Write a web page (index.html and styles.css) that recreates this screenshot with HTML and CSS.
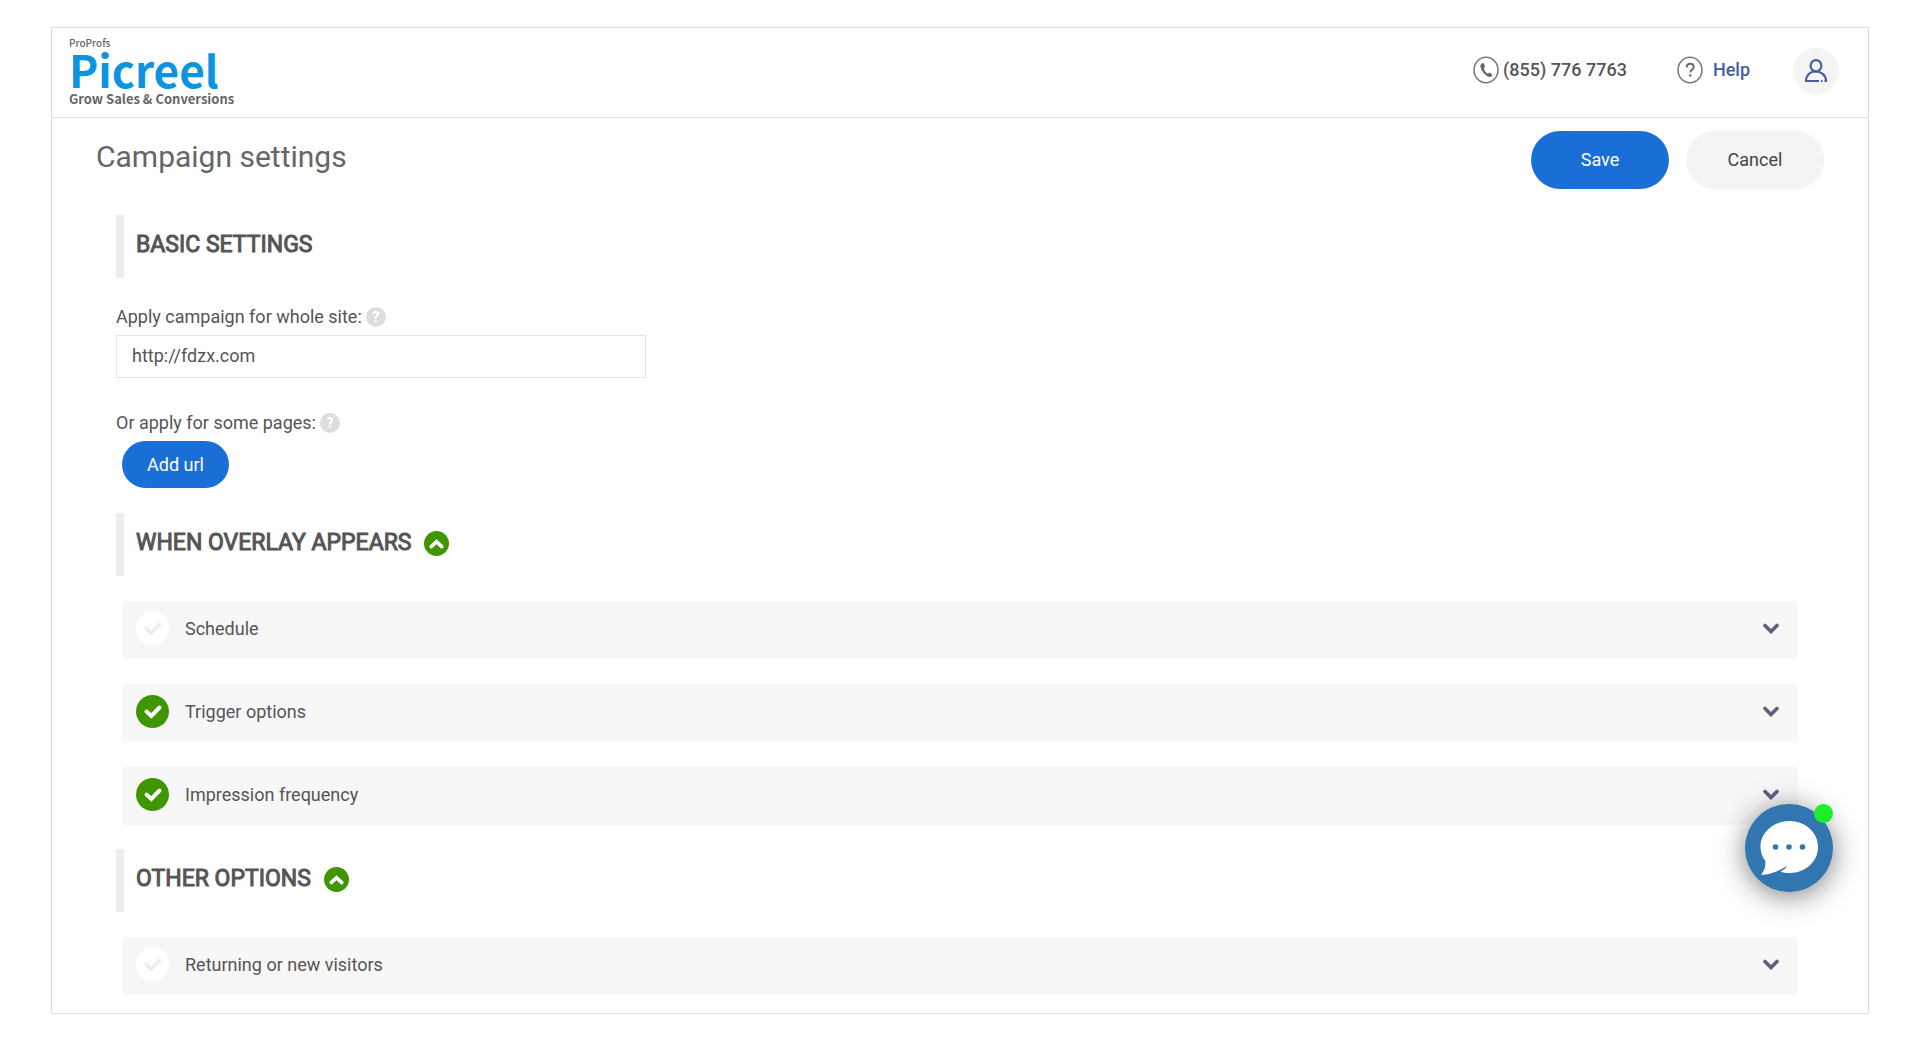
FILE: index.html
```html
<!DOCTYPE html>
<html lang="en">
<head>
  <meta charset="utf-8">
  <title>Campaign settings</title>
  <link rel="stylesheet" href="styles.css">
</head>
<body>
  <svg class="sprite" aria-hidden="true">
    <symbol id="check" viewBox="0 0 33 33">
      <path d="M10.500 16.500l4.800 4.500 8.200-8.500" fill="none" stroke="currentColor" stroke-width="4" stroke-linecap="round"/>
    </symbol>
    <symbol id="chevron-down" viewBox="0 0 16 11">
      <path d="M2 2.500l6 6 6-6" fill="none" stroke="currentColor" stroke-width="3.600" stroke-linecap="round"/>
    </symbol>
    <symbol id="chevron-up" viewBox="0 0 25 25">
      <path d="M7.200 15.600l5.300-5 5.300 5" fill="none" stroke="currentColor" stroke-width="3.600" stroke-linecap="round"/>
    </symbol>
  </svg>

  <div class="app">
    <header class="header">
      <a class="logo" href="#">
        <span class="logo-parent">ProProfs</span>
        <span class="logo-name">Picreel</span>
        <span class="logo-tagline">Grow Sales &amp; Conversions</span>
      </a>
      <nav class="header-nav">
        <a class="nav-link phone" href="tel:8557767763">
          <svg class="nav-icon" viewBox="0 0 26 28" aria-hidden="true">
            <ellipse cx="13" cy="14" rx="12" ry="12.700" fill="none" stroke="#777" stroke-width="1.500"/>
            <path d="M8.200 8c1-1.200 2-1.300 2.700-.2l1 1.900c.3.700.1 1.200-.7 1.900-.5.500-.4 1 0 1.900.8 1.700 1.500 2.900 2.700 3.800.7.500 1.100.4 1.600-.1.700-.7 1.200-.6 1.800-.2l1.500 1.200c.8.700.6 1.300-.1 2.100-1.500 1.300-3.500 1-6-1.200C9.500 16.500 7.800 13 7.400 10.500c-.1-1.100.2-1.900.8-2.500z" fill="#666"/>
          </svg>
          (855) 776 7763
        </a>
        <a class="nav-link help" href="#">
          <svg class="nav-icon" viewBox="0 0 26 28" aria-hidden="true">
            <ellipse cx="13" cy="14" rx="12" ry="12.700" fill="none" stroke="#777" stroke-width="1.500"/>
            <path d="M9.700 11.400c0-2.300 1.400-3.600 3.500-3.600s3.500 1.300 3.500 3.300c0 2.700-3.400 2.700-3.400 5.500" fill="none" stroke="#666" stroke-width="1.900"/>
            <circle cx="13.300" cy="19.500" r="1.200" fill="#666"/>
          </svg>
          Help
        </a>
        <button class="avatar" type="button" aria-label="Account">
          <svg width="24" height="24" viewBox="0 0 24 24" fill="none" stroke="#45609c" stroke-width="2.200" aria-hidden="true">
            <ellipse cx="12" cy="6.800" rx="5.400" ry="5.600"/>
            <path d="M15 22H2c0-5.500 3.600-9.500 9.500-9.500 6 0 10.500 4 10.500 9.500h-1.500M17 22h1.600"/>
          </svg>
        </button>
      </nav>
    </header>

    <main class="content">
      <div class="title-bar">
        <h1 class="title">Campaign settings</h1>
        <div class="actions">
          <button class="btn btn-primary" type="submit" form="settings">Save</button>
          <button class="btn btn-plain" type="button">Cancel</button>
        </div>
      </div>

      <form class="settings" id="settings">
        <h2 class="section-title">BASIC SETTINGS</h2>
        <div class="field">
          <div class="field-head">
            <label for="site">Apply campaign for whole site:</label>
            <button class="hint" type="button" aria-label="About whole site">?</button>
          </div>
          <input class="text-input" id="site" type="text" value="http://fdzx.com">
        </div>
        <div class="field">
          <div class="field-head">
            <label for="add-url">Or apply for some pages:</label>
            <button class="hint" type="button" aria-label="About some pages">?</button>
          </div>
          <button class="btn btn-primary btn-small" id="add-url" type="button">Add url</button>
        </div>

        <h2 class="section-title">WHEN OVERLAY APPEARS
          <button class="collapse" type="button" aria-label="Collapse"><svg width="25" height="25"><use href="#chevron-up"/></svg></button>
        </h2>
        <div class="panels">
          <button class="panel" type="button">
            <svg class="status"><use href="#check"/></svg>
            <span class="panel-name">Schedule</span>
            <svg class="arrow"><use href="#chevron-down"/></svg>
          </button>
          <button class="panel" type="button">
            <svg class="status status-on"><use href="#check"/></svg>
            <span class="panel-name">Trigger options</span>
            <svg class="arrow"><use href="#chevron-down"/></svg>
          </button>
          <button class="panel" type="button">
            <svg class="status status-on"><use href="#check"/></svg>
            <span class="panel-name">Impression frequency</span>
            <svg class="arrow"><use href="#chevron-down"/></svg>
          </button>
        </div>

        <h2 class="section-title">OTHER OPTIONS
          <button class="collapse" type="button" aria-label="Collapse"><svg width="25" height="25"><use href="#chevron-up"/></svg></button>
        </h2>
        <div class="panels">
          <button class="panel" type="button">
            <svg class="status"><use href="#check"/></svg>
            <span class="panel-name">Returning or new visitors</span>
            <svg class="arrow"><use href="#chevron-down"/></svg>
          </button>
        </div>
      </form>
    </main>
  </div>

  <button class="chat" type="button" aria-label="Chat">
    <svg width="88" height="88" viewBox="0 0 88 88" aria-hidden="true">
      <path d="M44.500 17C60 17 73 28 73 43S60 69 44.500 69c-3.500 0-6.500-.5-9-1.500 3-1.500 5-3 7-5.500-7 3.500-15 8.500-26.500 9 3.500-4.500 4.500-8.500 4.500-14-3.200-4-5-8.500-5-14C15.500 28 29 17 44.500 17z" fill="#fff"/>
      <circle cx="30.500" cy="43" r="2.800" fill="#3276b1"/>
      <circle cx="44" cy="43" r="2.800" fill="#3276b1"/>
      <circle cx="57.500" cy="43" r="2.800" fill="#3276b1"/>
    </svg>
    <span class="chat-online"></span>
  </button>
</body>
</html>
```
FILE: styles.css
```css
* {
  box-sizing: border-box;
}

body {
  margin: 0;
  padding: 27px 51px 26px;
  background: #fff;
  color: #555;
  font: 18px/24px Roboto, "Liberation Sans", sans-serif;
}

button {
  padding: 0;
  border: 0;
  background: none;
  color: inherit;
  font: inherit;
  cursor: pointer;
}

a {
  color: inherit;
  text-decoration: none;
}

.sprite {
  position: absolute;
  width: 0;
  height: 0;
}

.app {
  border: 1px solid #ddd;
}

/* Header */

.header {
  display: flex;
  justify-content: space-between;
  align-items: center;
  height: 90px;
  padding: 0 29px 3px 17px;
  border-bottom: 1px solid #e2e2e2;
}

.logo {
  display: flex;
  flex-direction: column;
  color: #666;
  font-family: "Noto Sans CJK SC", sans-serif;
  font-weight: 700;
}

.logo-parent {
  font-size: 10px;
  line-height: 12px;
  font-weight: 500;
}

.logo-name {
  color: #0c94de;
  font-size: 44px;
  line-height: 40px;
}

.logo-tagline {
  padding-top: 3px;
  font-size: 13px;
  line-height: 14px;
}

.header-nav {
  display: flex;
  align-items: center;
}

.nav-link {
  display: flex;
  align-items: center;
  gap: 4px;
  padding-bottom: 2px;
  font-weight: 500;
}

.nav-icon {
  width: 26px;
  height: 28px;
}

.phone {
  margin-right: 50px;
}

.help {
  gap: 10px;
  margin-right: 43px;
  color: #45609c;
}

.avatar {
  display: grid;
  place-items: center;
  width: 46px;
  height: 46px;
  border-radius: 50%;
  background: #f4f4f4;
}

/* Page */

.content {
  padding: 13px 44px 18px;
}

.title-bar {
  display: flex;
  justify-content: space-between;
}

.title {
  margin: 6px 0 0;
  color: #666;
  font-size: 30px;
  line-height: 40px;
  font-weight: 400;
}

.actions {
  display: flex;
  gap: 17px;
}

.btn {
  width: 138px;
  height: 58px;
  border-radius: 29px;
}

.btn-primary {
  background: #1a6fd6;
  color: #fff;
}

.btn-plain {
  background: #f4f4f4;
  color: #444;
}

.btn-small {
  width: 107px;
  height: 47px;
  margin-left: 6px;
}

.settings {
  padding: 26px 26px 0 20px;
}

.section-title {
  display: flex;
  align-items: center;
  gap: 13px;
  height: 63px;
  margin: 0 0 25px;
  padding: 0 0 3px 12px;
  border-left: 8px solid #ededed;
  font-size: 23px;
  line-height: 32px;
  font-weight: 400;
  -webkit-text-stroke: 1px currentColor;
}

.field {
  margin-bottom: 25px;
}

.field-head {
  display: flex;
  align-items: center;
  gap: 4px;
  height: 32px;
  padding-bottom: 4px;
}

.field + .field {
  padding-top: 6px;
}

.hint {
  width: 20px;
  height: 20px;
  border-radius: 50%;
  background: #ddd;
  color: #fff;
  font-size: 14px;
  line-height: 20px;
  font-weight: 700;
}

.text-input {
  display: block;
  width: 530px;
  max-width: 100%;
  height: 43px;
  padding: 0 15px 2px;
  border: 1px solid #e4e4e4;
  color: inherit;
  font: inherit;
}

.collapse {
  display: grid;
  width: 25px;
  height: 25px;
  border-radius: 50%;
  background: #3f9600;
  color: #fff;
}

.panels {
  display: flex;
  flex-direction: column;
  gap: 25px;
  margin: 0 0 24px 6px;
}

.panels:last-child {
  margin-bottom: 0;
}

.panel {
  display: flex;
  align-items: center;
  height: 58px;
  padding: 0 19px 3px 14px;
  border-radius: 4px;
  background: #f7f7f7;
  text-align: left;
}

.panel-name {
  flex: 1;
  margin-left: 16px;
}

.status {
  width: 33px;
  height: 33px;
  border-radius: 50%;
  background: #fff;
  color: #eee;
}

.status-on {
  background: #3f9600;
  color: #fff;
}

.arrow {
  width: 16px;
  height: 11px;
  color: #5f5f80;
}

/* Chat launcher */

.chat {
  position: fixed;
  right: 87px;
  bottom: 149px;
  width: 88px;
  height: 88px;
  border-radius: 50%;
  background: #3276b1;
  box-shadow: 0 4px 28px rgba(0, 0, 0, .5);
}

.chat-online {
  position: absolute;
  top: 0;
  right: 0;
  width: 19px;
  height: 19px;
  border-radius: 50%;
  background: #1eee2a;
}
```
